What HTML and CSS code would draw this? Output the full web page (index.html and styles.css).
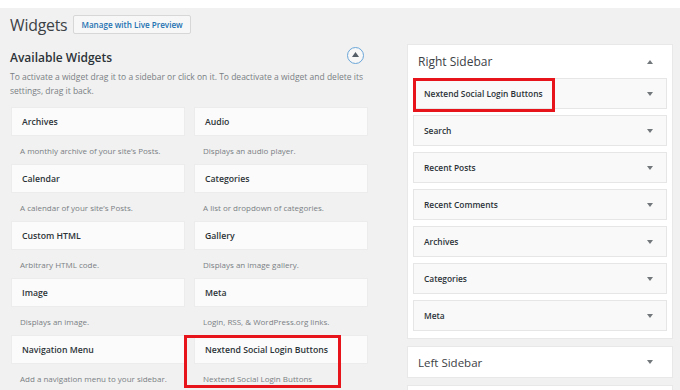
FILE: index.html
```html
<!doctype html>
<html lang="en">
<head>
  <meta charset="utf-8" />
  <title>Widgets</title>
  <link rel="stylesheet" href="styles.css">
</head>
<body>
  <div class="topStrip"></div>

  <div class="wrap">
    <!-- Left: available widgets -->
    <div class="leftCol">
      <div class="pageHead">
        <h1>Widgets</h1>
        <button class="liveBtn" type="button">Manage with Live Preview</button>
      </div>

      <div class="availHead">
        <h2>Available Widgets</h2>
        <span class="collapseBtn">
          <svg width="7" height="5" viewBox="0 0 7 5"><path d="M0 5 L3.5 0 L7 5 Z" fill="#555d66"/></svg>
        </span>
      </div>
      <p class="availDesc">To activate a widget drag it to a sidebar or click on it. To deactivate a widget and delete its settings, drag it back.</p>

      <div class="widgetGrid">
        <div class="widget">
          <div class="widgetTitle">Archives</div>
          <div class="widgetDesc">A monthly archive of your site’s Posts.</div>
        </div>
        <div class="widget">
          <div class="widgetTitle">Audio</div>
          <div class="widgetDesc">Displays an audio player.</div>
        </div>
        <div class="widget">
          <div class="widgetTitle">Calendar</div>
          <div class="widgetDesc">A calendar of your site’s Posts.</div>
        </div>
        <div class="widget">
          <div class="widgetTitle">Categories</div>
          <div class="widgetDesc">A list or dropdown of categories.</div>
        </div>
        <div class="widget">
          <div class="widgetTitle">Custom HTML</div>
          <div class="widgetDesc">Arbitrary HTML code.</div>
        </div>
        <div class="widget">
          <div class="widgetTitle">Gallery</div>
          <div class="widgetDesc">Displays an image gallery.</div>
        </div>
        <div class="widget">
          <div class="widgetTitle">Image</div>
          <div class="widgetDesc">Displays an image.</div>
        </div>
        <div class="widget">
          <div class="widgetTitle">Meta</div>
          <div class="widgetDesc">Login, RSS, &amp; WordPress.org links.</div>
        </div>
        <div class="widget">
          <div class="widgetTitle">Navigation Menu</div>
          <div class="widgetDesc">Add a navigation menu to your sidebar.</div>
        </div>
        <div class="widget">
          <div class="widgetTitle">Nextend Social Login Buttons</div>
          <div class="widgetDesc">Nextend Social Login Buttons</div>
          <div class="redMark leftMark"></div>
        </div>
      </div>
    </div>

    <!-- Right: sidebars -->
    <div class="rightCol">
      <div class="sidebarBox">
        <div class="sidebarName">
          <h3>Right Sidebar</h3>
          <span class="arrow up"></span>
        </div>
        <div class="sbItem">
          <span>Nextend Social Login Buttons</span><span class="arrow"></span>
          <div class="redMark rightMark"></div>
        </div>
        <div class="sbItem"><span>Search</span><span class="arrow"></span></div>
        <div class="sbItem"><span>Recent Posts</span><span class="arrow"></span></div>
        <div class="sbItem"><span>Recent Comments</span><span class="arrow"></span></div>
        <div class="sbItem"><span>Archives</span><span class="arrow"></span></div>
        <div class="sbItem"><span>Categories</span><span class="arrow"></span></div>
        <div class="sbItem"><span>Meta</span><span class="arrow"></span></div>
      </div>

      <div class="sidebarBox closed">
        <div class="sidebarName">
          <h3>Left Sidebar</h3>
          <span class="arrow"></span>
        </div>
      </div>

      <div class="sidebarBox stub"></div>
    </div>
  </div>
</body>
</html>
```

FILE: styles.css
```css
:root{
  --font: "Open Sans", "Noto Sans", Arial, sans-serif;
  --bg: #f1f1f1;
  --text: #2c3338;
  --muted: #7a7f84;
  --red: #e8141c;
}

*{ box-sizing:border-box }
body{
  margin:0;
  background: var(--bg);
  font-family: var(--font);
  color: var(--text);
  overflow:hidden;
}

.topStrip{ height:8px; background:#fff; }

.wrap{
  display:flex;
  gap:39px;
  padding:0 0 0 10px;
}

/* Left column */
.leftCol{ width:358px; }

.pageHead{
  display:flex;
  align-items:center;
  gap:6px;
  padding-top:7px;
  height:27px;
}
.pageHead h1{
  margin:0;
  font-size:15.8px;
  font-weight:400;
  letter-spacing:-.2px;
  color:#3c4146;
}
.liveBtn{
  font: inherit;
  font-size:8.1px;
  font-weight:600;
  color:#2271b1;
  background:#f7f7f7;
  border:1px solid #d7d7d7;
  border-radius:2px;
  padding:0 7px;
  height:19px;
  margin-top:-1px;
}

.availHead{
  display:flex;
  align-items:center;
  justify-content:space-between;
  margin-top:14px;
  padding-right:4px;
}
.availHead h2{
  margin:0;
  font-size:12px;
  font-weight:600;
  color:#2c3338;
}
.collapseBtn{
  width:17px; height:17px;
  border-radius:50%;
  border:1.5px solid #6aa6d8;
  display:grid;
  place-items:center;
  background:#f7f7f7;
  margin-top:-5px;
}
.collapseBtn svg{ display:block; margin-top:-1px; }

.availDesc{
  margin:4px 0 0;
  font-size:8.5px;
  line-height:14px;
  color:var(--muted);
}

.widgetGrid{
  display:grid;
  grid-template-columns: 174px 174px;
  column-gap:9px;
  margin-top:9px;
  margin-left:1px;
}
.widget{ position:relative; }
.widgetTitle{
  height:29px;
  background:#fbfbfb;
  border:1px solid #ececec;
  padding:0 10px;
  display:flex;
  align-items:center;
  font-size:8.7px;
  font-weight:600;
  color:var(--text);
}
.widgetDesc{
  height:28px;
  display:flex;
  align-items:center;
  padding:0 9px;
  font-size:8px;
  color:var(--muted);
}

/* Red annotation boxes */
.redMark{
  position:absolute;
  border:3px solid var(--red);
  pointer-events:none;
}
.leftMark{ left:-10px; top:0; width:157px; height:53px; }
.rightMark{ left:-1px; top:-1px; width:142px; height:34px; }

/* Right column */
.rightCol{ width:266px; padding-top:36px; }

.sidebarBox{
  background:#fff;
  border:1px solid #e8e8e8;
  padding:0 5px 7px;
  margin-bottom:7px;
}
.sidebarBox.closed{ padding-bottom:0; height:32px; }
.sidebarBox.stub{ height:20px; padding:0; }

.sidebarName{
  height:33px;
  display:flex;
  align-items:center;
  justify-content:space-between;
  padding:0 14px 0 5px;
}
.sidebarName h3{
  margin:0;
  font-size:12px;
  font-weight:500;
  color:#3c4146;
}
.closed .sidebarName{ height:30px; }
.closed .sidebarName h3{ font-size:11.5px; }

.sbItem{
  position:relative;
  height:31px;
  background:#f9f9f9;
  border:1px solid #e6e6e6;
  display:flex;
  align-items:center;
  justify-content:space-between;
  padding:0 13px 0 10px;
  margin-bottom:6px;
  font-size:8.4px;
  font-weight:600;
  color:var(--text);
}
.sbItem:last-child{ margin-bottom:0; }

.arrow{
  width:0; height:0;
  border-left:3px solid transparent;
  border-right:3px solid transparent;
  border-top:4px solid #72777c;
}
.arrow.up{
  border-top:0;
  border-bottom:4px solid #72777c;
}
```
